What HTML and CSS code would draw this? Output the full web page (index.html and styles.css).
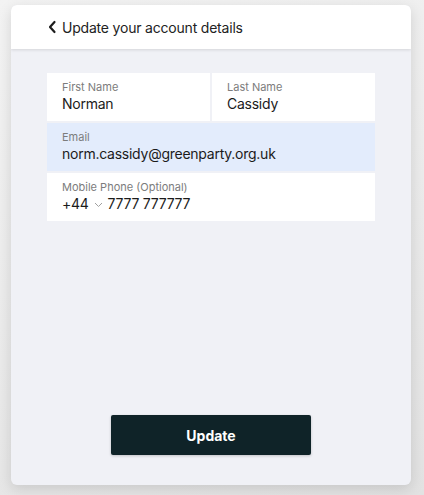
FILE: index.html
```html
<!DOCTYPE html>
<html lang="en">
<head>
    <meta charset="UTF-8">
    <meta name="viewport" content="width=device-width, initial-scale=1.0">
    <title>Update your account details</title>
    <link rel="stylesheet" href="styles.css">
</head>
<body>
    <div class="card">
        <div class="header">
            <svg class="back" width="9" height="14" viewBox="0 0 9 14">
                <polyline points="6.5,2 2,7 6.5,12" fill="none" stroke="#1d1d1d" stroke-width="2.2" stroke-linecap="round" stroke-linejoin="round"/>
            </svg>
            <span class="title">Update your account details</span>
        </div>
        <div class="content">
            <div class="fields">
                <div class="field">
                    <div class="label">First Name</div>
                    <div class="value">Norman</div>
                </div>
                <div class="field">
                    <div class="label">Last Name</div>
                    <div class="value">Cassidy</div>
                </div>
                <div class="field wide focused">
                    <div class="label">Email</div>
                    <div class="value">norm.cassidy@greenparty.org.uk</div>
                </div>
                <div class="field wide">
                    <div class="label">Mobile Phone (Optional)</div>
                    <div class="value phone">
                        <span>+44</span>
                        <svg class="caret" width="9" height="6" viewBox="0 0 9 6">
                            <polyline points="1,1 4.5,4.5 8,1" fill="none" stroke="#a0a0a0" stroke-width="1"/>
                        </svg>
                        <span>7777 777777</span>
                    </div>
                </div>
            </div>
            <button class="update">Update</button>
        </div>
    </div>
</body>
</html>
```

FILE: styles.css
```css
body {
    margin: 0;
    padding: 5px 13px 0 11px;
    height: 495px;
    box-sizing: border-box;
    overflow: hidden;
    font-family: Inter, "Liberation Sans", sans-serif;
    background-color: #ebebeb;
    background-image: linear-gradient(160deg, #f3f3f3 0%, #ececec 45%, #e2e2e2 100%);
}

.card {
    width: 400px;
    height: 480px;
    border-radius: 6px;
    background-color: #f0f1f6;
    box-shadow: 0 4px 14px rgba(0, 0, 0, 0.13);
    display: flex;
    flex-direction: column;
    overflow: hidden;
}

.header {
    height: 44px;
    background-color: #fff;
    display: flex;
    align-items: center;
    padding-left: 37px;
    box-shadow: 0 1px 3px rgba(0, 0, 0, 0.12);
    position: relative;
}

.back {
    margin-right: 5px;
}

.title {
    font-size: 14px;
    letter-spacing: -0.2px;
    color: #222;
}

.content {
    flex: 1;
    display: flex;
    flex-direction: column;
    align-items: center;
    padding: 24px 36px 30px;
}

.fields {
    width: 100%;
    display: grid;
    grid-template-columns: 1fr 1fr;
    gap: 2px;
}

.field {
    height: 48px;
    box-sizing: border-box;
    padding: 7px 15px 0;
    background-color: #fff;
}

.wide {
    grid-column: span 2;
}

.focused {
    background-color: #e3ecfc;
}

.label {
    font-size: 11px;
    line-height: 14px;
    color: #7c7c7c;
}

.value {
    font-size: 14px;
    line-height: 19px;
    letter-spacing: -0.25px;
    color: #1b1b1b;
}

.phone {
    display: flex;
    align-items: center;
}

.caret {
    margin: 2px 5px 0 5px;
}

.update {
    margin-top: auto;
    width: 200px;
    height: 40px;
    border: none;
    border-radius: 2px;
    background-color: #0f2328;
    color: #fff;
    font-family: Inter, "Liberation Sans", sans-serif;
    font-size: 14px;
    font-weight: 700;
    box-shadow: 0 1px 3px rgba(0, 0, 0, 0.2);
}
```
